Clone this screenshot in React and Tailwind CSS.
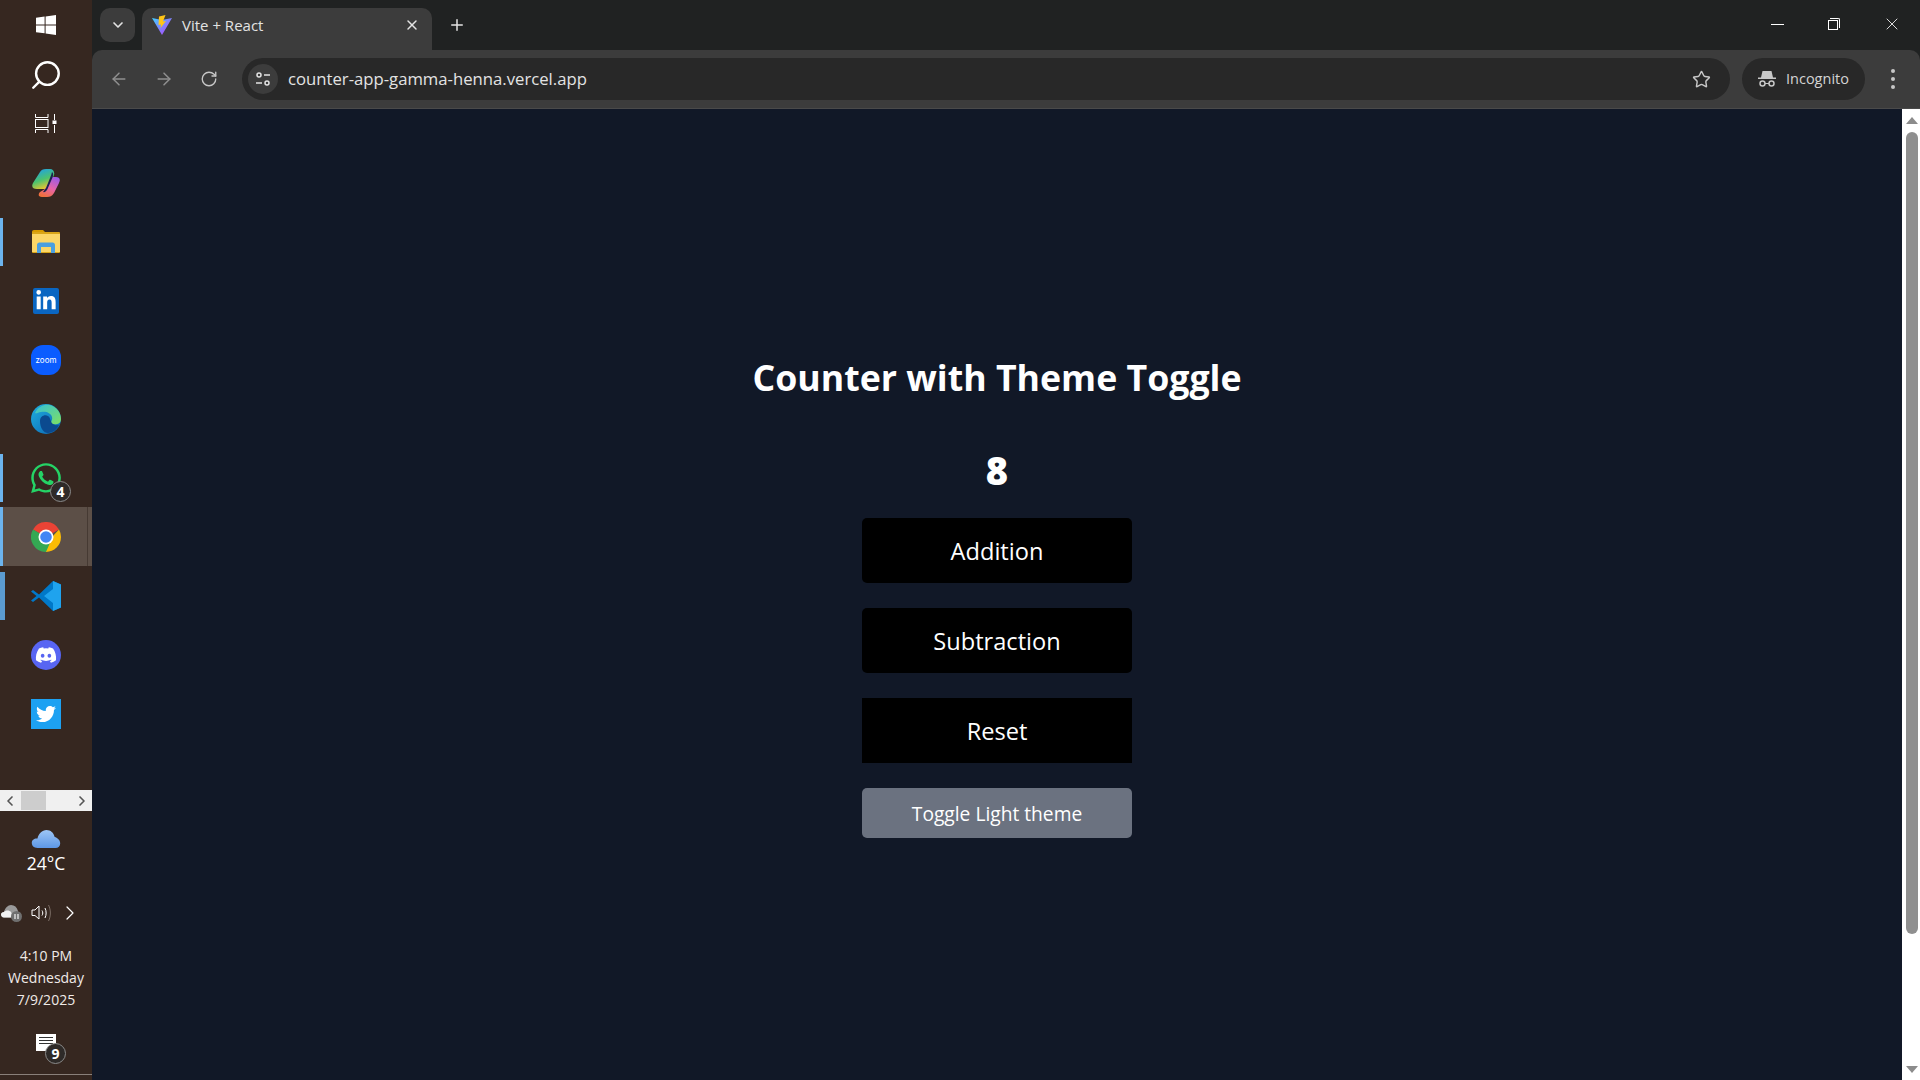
import React from 'react';
import { FaDiscord, FaTwitter, FaWhatsapp, FaLinkedinIn } from 'react-icons/fa';
import { ChevronDown, X, Plus, ArrowLeft, ArrowRight, RotateCw, Star, Search, ChevronLeft, ChevronRight } from 'lucide-react';

const WindowsIcon = () => (
    <svg width="20" height="20" viewBox="0 0 20 20" fill="#fff">
        <path d="M0 2.8 8.6 1.6V9.4H0ZM9.6 1.4 20 0V9.4H9.6ZM0 10.4H8.6V18.3L0 17.2ZM9.6 10.4H20V20L9.6 18.5Z" />
    </svg>
);

const TaskViewIcon = () => (
    <svg width="22" height="20" viewBox="0 0 22 20" fill="none" stroke="#fff" strokeWidth="1">
        <path d="M.5 0V3.5H13V0M.5 19V15.5H13V19" />
        <rect x=".5" y="5.5" width="12.5" height="8" />
        <path d="M19.5 0V6M19.5 11V19" />
        <rect x="17.5" y="6.5" width="4" height="3.5" fill="#fff" stroke="none" />
    </svg>
);

const CopilotIcon = () => (
    <svg width="28" height="28" viewBox="0 0 28 28">
        <defs>
            <linearGradient id="copA" x1="0.2" y1="0" x2="0.6" y2="1">
                <stop offset="0" stopColor="#1c9fee" />
                <stop offset=".55" stopColor="#4cc36e" />
                <stop offset="1" stopColor="#f5c42c" />
            </linearGradient>
            <linearGradient id="copB" x1="0.8" y1="0" x2="0.3" y2="1">
                <stop offset="0" stopColor="#9a5be6" />
                <stop offset=".55" stopColor="#e864a8" />
                <stop offset="1" stopColor="#f0703c" />
            </linearGradient>
        </defs>
        <path d="M8 3C9 1 11 0 14 0H18C21 0 23 3 22 6L16 20H5C1 20 -1 18 1 14Z" fill="url(#copA)" />
        <path d="M20 8H24C27 8 29 10 27 14L22 24C20 27 18 28 15 28H10C6 28 6 25 8 23L13 20Z" fill="url(#copB)" />
        <path d="M20 3C21.500 4 21.500 6 20.500 8.500L15.500 20C14.500 22.500 12.500 23.500 11 23L14 19L18 9C19 7 19.500 5 20 3Z" fill="#1b2350" />
    </svg>
);

const FolderIcon = () => (
    <svg width="28" height="24" viewBox="0 0 28 24">
        <path d="M0 2C0 .8.8 0 2 0H11L13 2V5H0Z" fill="#d79b00" />
        <rect x="0" y="2" width="28" height="21" rx="1" fill="#d9a518" />
        <rect x="0" y="4" width="28" height="18" fill="#fbd667" />
        <path d="M5 23V15C5 13.5 6 12.5 7.5 12.5H20.5C22 12.5 23 13.5 23 15V23H19V17H9V23Z" fill="#4a9fe0" />
    </svg>
);

const EdgeIcon = () => (
    <svg width="30" height="30" viewBox="0 0 30 30">
        <defs>
            <linearGradient id="edgeA" x1="0" y1="0" x2="1" y2="1">
                <stop offset="0" stopColor="#1fb0e0" />
                <stop offset="1" stopColor="#0c62b0" />
            </linearGradient>
            <linearGradient id="edgeB" x1="0" y1="0" x2="1" y2="1">
                <stop offset="0" stopColor="#35c1d8" />
                <stop offset="1" stopColor="#7fe060" />
            </linearGradient>
        </defs>
        <circle cx="15" cy="15" r="15" fill="url(#edgeA)" />
        <path d="M4 9C7 2 14 0 19 1C26 3 30 9 30 15C30 20 25 21 21 20C18 19 22 17 21 13C20 9 15 7 10 8C7 8.500 5 10 4 9Z" fill="url(#edgeB)" />
        <path d="M9 17C9 12 14 10 17 12C20 14 19 18 22 20C25 22 27 21 28 21C26 26 21 29 17 29C12 29 9 23 9 17Z" fill="#0b4a8f" />
    </svg>
);

const ChromeIcon = () => (
    <svg width="30" height="30" viewBox="0 0 30 30">
        <path d="M15 15 2 7.500A15 15 0 0 1 28 7.500Z" fill="#ea4335" />
        <path d="M15 15H30A15 15 0 0 1 15 30Z" fill="#fbbc04" />
        <path d="M28 7.500A15 15 0 0 1 30 15L15 30 21 15Z" fill="#fbbc04" />
        <path d="M2 7.500 15 15 21.500 15 15 30A15 15 0 0 1 2 7.500Z" fill="#34a853" />
        <circle cx="15" cy="15" r="7.500" fill="#fff" />
        <circle cx="15" cy="15" r="5.800" fill="#4285f4" />
    </svg>
);

const VsCodeIcon = () => (
    <svg width="30" height="30" viewBox="0 0 30 30">
        <path d="M22 0 30 3.500V26.500L22 30 8 16.500 2 21 0 19.500 5.500 15 0 10.500 2 9 8 13.500Z" fill="#0078c8" />
        <path d="M22 0 30 3.500V26.500L22 30ZM22 8 13 15 22 22Z" fill="#1fa3ee" fillRule="evenodd" />
    </svg>
);

const WeatherIcon = () => (
    <svg width="30" height="18" viewBox="0 0 30 19">
        <defs>
            <linearGradient id="cloud" x1="0" y1="0" x2="0" y2="1">
                <stop offset="0" stopColor="#9ec6f5" />
                <stop offset="1" stopColor="#5d97e6" />
            </linearGradient>
        </defs>
        <path d="M6 19C2 19 0 16.500 0 13.500 0 10.500 3 8.500 6 9 7 4 11 0 15.500 0 20 0 23 3 24 7 27 8 30 10.500 30 14 30 17 28 19 25 19Z" fill="url(#cloud)" />
    </svg>
);

const TrayCloudIcon = () => (
    <svg width="21" height="17" viewBox="0 0 21 17">
        <path d="M3 12.500C1 12.500 0 11 0 9.500 0 8 1.500 7 3 7 4 3 7 0 10 0 13.500 0 16 2 17 6V12.500Z" fill="#9a9a9a" />
        <path d="M3 12.500C1 12.500 0 11 0 9.500 0 8 1.500 7 3 7 5 5 8 5 10 7 11 8.500 11 11 10 12.500Z" fill="#f2f2f2" />
        <circle cx="15.500" cy="11.500" r="5.500" fill="#6f6f6f" />
        <path d="M14 9V14M17 9V14" stroke="#f2f2f2" strokeWidth="1.200" />
    </svg>
);

const SpeakerIcon = () => (
    <svg width="22" height="18" viewBox="0 0 22 18" fill="none" stroke="#fff" strokeWidth="1">
        <path d="M1 6H4L8 2V15L4 11.500H1Z" />
        <path d="M11 6.500C12 8 12 10 11 11.500" />
        <path d="M14 4C15.500 7 15.500 11 14 14" />
        <path d="M17.500 1C20 6 20 12 17.500 17" stroke="#7a6c64" />
    </svg>
);

const ViteIcon = () => (
    <svg width="20" height="20" viewBox="0 0 20 20">
        <defs>
            <linearGradient id="viteA" x1="0" y1="0" x2="1" y2="1">
                <stop offset="0" stopColor="#41d1ff" />
                <stop offset="1" stopColor="#bd34fe" />
            </linearGradient>
        </defs>
        <path d="M0 3 10 5 20 3 10 20Z" fill="url(#viteA)" />
        <path d="M13.500 0 7 1.500 6.500 10 9 9.500 8.500 13 14 6 11 6.500Z" fill="#ffc517" />
    </svg>
);

const TuneIcon = () => (
    <svg width="16" height="16" viewBox="0 0 16 16" fill="none" stroke="#e3e3e3" strokeWidth="1.500">
        <circle cx="4" cy="4" r="2" />
        <path d="M9 4H15M1 12H7" />
        <circle cx="12" cy="12" r="2" />
    </svg>
);

const IncognitoIcon = () => (
    <svg width="18" height="16" viewBox="0 0 18 16" fill="#c7c7c7">
        <path d="M4.500 0H13.500L15 6.500H18V8H0V6.500H3Z" />
        <circle cx="4.500" cy="12.500" r="2.500" fill="none" stroke="#c7c7c7" strokeWidth="1.500" />
        <circle cx="13.500" cy="12.500" r="2.500" fill="none" stroke="#c7c7c7" strokeWidth="1.500" />
        <path d="M7 12H11V13H7Z" />
    </svg>
);

const TaskbarItem = ({ children, indicator, active, open }) => (
    <div className={`relative h-[59px] flex items-center justify-center ${active ? 'bg-[#5c4f47]' : ''}`}>
        {indicator && <div className="absolute left-0 top-[6px] bottom-[5px] w-[3px] bg-[#6cb4ee]"></div>}
        {active && <div className="absolute left-0 top-0 bottom-0 w-[3px] bg-[#6cb4ee]"></div>}
        {active && <div className="absolute right-[4px] top-0 bottom-0 w-[1px] bg-[#463a33]"></div>}
        {open && <div className="absolute left-0 top-[6px] bottom-[5px] w-[5px] bg-[#5b9bd0]"></div>}
        {children}
    </div>
);

const Badge = ({ value, className }) => (
    <span className={`absolute w-[21px] h-[21px] rounded-full bg-[#2e2a28] border border-[#8a8a8a] text-white text-[14px] font-bold leading-[19px] text-center ${className}`}>
        {value}
    </span>
);

const Taskbar = () => (
    <aside className="w-[92px] h-full shrink-0 bg-[#362720] flex flex-col text-white">
        <div className="h-[50px] flex items-center justify-center"><WindowsIcon /></div>
        <div className="h-[49px] flex items-center justify-center"><Search size={34} strokeWidth={1.700} className="-scale-x-100" /></div>
        <div className="h-[49px] flex items-center justify-center"><TaskViewIcon /></div>
        <div className="h-[64px] pt-[5px] flex items-center justify-center"><CopilotIcon /></div>
        <TaskbarItem indicator><FolderIcon /></TaskbarItem>
        <TaskbarItem>
            <div className="w-[26px] h-[26px] bg-[#0a66c2] rounded-[2px] flex items-center justify-center"><FaLinkedinIn size={22} color="#fff" /></div>
        </TaskbarItem>
        <TaskbarItem>
            <div className="w-[30px] h-[30px] bg-[#0b5cff] rounded-[12px] flex items-center justify-center text-[8px] text-white font-['Inter',sans-serif]">zoom</div>
        </TaskbarItem>
        <TaskbarItem><EdgeIcon /></TaskbarItem>
        <TaskbarItem indicator>
            <div className="relative">
                <FaWhatsapp size={34} color="#25d366" />
                <Badge value="4" className="left-[21px] top-[20px]" />
            </div>
        </TaskbarItem>
        <TaskbarItem active><ChromeIcon /></TaskbarItem>
        <TaskbarItem open><VsCodeIcon /></TaskbarItem>
        <TaskbarItem>
            <div className="w-[30px] h-[30px] bg-[#5865f2] rounded-full flex items-center justify-center"><FaDiscord size={22} color="#fff" /></div>
        </TaskbarItem>
        <TaskbarItem>
            <div className="w-[30px] h-[30px] bg-[#1da1f2] flex items-center justify-center"><FaTwitter size={20} color="#fff" /></div>
        </TaskbarItem>
        <div className="relative mt-[47px] h-[21px] bg-[#f0f0f0] flex items-center justify-between px-[2px]">
            <ChevronLeft size={16} color="#555" strokeWidth={2.500} />
            <div className="absolute left-[21px] top-[1px] w-[25px] h-[19px] bg-[#cdcdcd]"></div>
            <ChevronRight size={16} color="#555" strokeWidth={2.500} />
        </div>
        <div className="mt-[19px] flex flex-col items-center">
            <WeatherIcon />
            <div className="text-[17.500px] leading-[22px] mt-[4px]">24°C</div>
        </div>
        <div className="mt-[28px] h-[22px] flex items-center pl-[1px]">
            <TrayCloudIcon />
            <div className="ml-[9px]"><SpeakerIcon /></div>
            <ChevronRight size={24} strokeWidth={1.200} className="ml-[5px]" />
        </div>
        <div className="mt-[21px] text-center text-[14px] leading-[22px] text-[#f0ebe8]">
            <div>4:10 PM</div>
            <div>Wednesday</div>
            <div>7/9/2025</div>
        </div>
        <div className="mt-[23px] relative flex justify-center">
            <div className="relative w-[20px] h-[17px] bg-white flex flex-col gap-[2px] px-[3px] pt-[3px]">
                <div className="h-[1px] bg-[#333]"></div>
                <div className="h-[1px] bg-[#333]"></div>
                <div className="h-[1px] bg-[#333]"></div>
                <Badge value="9" className="left-[9px] top-[9px]" />
            </div>
        </div>
        <div className="mt-auto mb-[5px] h-[1px] bg-[#8a807a]"></div>
    </aside>
);

const TabStrip = () => (
    <div className="h-[50px] bg-[#202222] flex items-start pl-[8px]">
        <div className="mt-[8px] w-[35px] h-[34px] rounded-[10px] bg-[#3c3c3c] flex items-center justify-center">
            <ChevronDown size={16} color="#e3e3e3" strokeWidth={2.500} />
        </div>
        <div className="mt-[8px] ml-[7px] w-[290px] h-[42px] rounded-t-[10px] bg-[#3c3c3c] flex items-center pl-[10px] pr-[12px] pb-[8px] text-[#e3e3e3]">
            <ViteIcon />
            <span className="ml-[10px] text-[15px] flex-1 font-['Open_Sans',sans-serif]">Vite + React</span>
            <X size={16} strokeWidth={2.200} />
        </div>
        <Plus size={18} color="#e3e3e3" strokeWidth={2} className="mt-[16px] ml-[16px]" />
        <div className="ml-auto flex items-center h-[50px] pb-[2px] text-white">
            <div className="w-[13px] h-[1px] bg-white mr-[44px]"></div>
            <div className="relative w-[12px] h-[12px] mr-[42px]">
                <div className="absolute right-0 top-0 w-[10px] h-[10px] border-t border-r border-white rounded-tr-[2px]"></div>
                <div className="absolute left-0 bottom-0 w-[10px] h-[10px] border border-white bg-[#202222]"></div>
            </div>
            <X size={20} strokeWidth={1} className="mr-[18px]" />
        </div>
    </div>
);

const Toolbar = () => (
    <div className="h-[59px] bg-[#3c3c3c] rounded-tl-[10px] rounded-tr-[10px] border-b border-[#4a4a4a] flex items-center pl-[17px] pr-[25px] text-[#8f8f8f]">
        <ArrowLeft size={20} strokeWidth={1.800} />
        <ArrowRight size={20} strokeWidth={1.800} className="ml-[25px]" />
        <RotateCw size={18} color="#c7c7c7" strokeWidth={1.800} className="ml-[26px]" />
        <div className="ml-[24px] flex-1 h-[42px] rounded-full bg-[#282828] flex items-center pl-[6px] pr-[19px]">
            <div className="w-[30px] h-[30px] rounded-full bg-[#3c3c3c] flex items-center justify-center"><TuneIcon /></div>
            <span className="ml-[10px] flex-1 text-[#e3e3e3] text-[16.700px] font-['Open_Sans',sans-serif]">counter-app-gamma-henna.vercel.app</span>
            <Star size={19} color="#c7c7c7" strokeWidth={1.800} />
        </div>
        <div className="ml-[12px] w-[123px] h-[42px] rounded-full bg-[#282828] flex items-center pl-[16px] text-[#d4d4d4] text-[14.500px] font-['Open_Sans',sans-serif]">
            <IncognitoIcon />
            <span className="ml-[10px]">Incognito</span>
        </div>
        <div className="ml-[26px] flex flex-col gap-[4px]">
            <div className="w-[4px] h-[4px] rounded-full bg-[#c7c7c7]"></div>
            <div className="w-[4px] h-[4px] rounded-full bg-[#c7c7c7]"></div>
            <div className="w-[4px] h-[4px] rounded-full bg-[#c7c7c7]"></div>
        </div>
    </div>
);

const Scrollbar = () => (
    <div className="w-[18px] h-full bg-white flex flex-col items-center pl-[2px]">
        <div className="mt-[8px] w-0 h-0 border-x-[6px] border-x-transparent border-b-[7px] border-b-[#8c8c8c]"></div>
        <div className="mt-[8px] w-[12px] h-[802px] rounded-full bg-[#8f8f8f]"></div>
        <div className="mt-auto mb-[7px] w-0 h-0 border-x-[6px] border-x-transparent border-t-[7px] border-t-[#8c8c8c]"></div>
    </div>
);

const App = () => {
    return (
        <div className="w-[1920px] h-[1080px] overflow-hidden flex font-['Open_Sans',sans-serif] bg-[#202222]">
            <Taskbar />
            <div className="flex-1 flex flex-col min-w-0">
                <TabStrip />
                <Toolbar />
                <div className="flex-1 flex min-h-0">
                    <main className="flex-1 bg-[#111827] flex flex-col items-center pt-[244px] text-white">
                        <h1 className="text-[35.700px] leading-[48px] font-bold">Counter with Theme Toggle</h1>
                        <p className="mt-[45px] text-[38px] leading-[48px] font-extrabold">8</p>
                        <button className="mt-[24px] w-[270px] h-[65px] pt-[3px] bg-black rounded-[5px] text-[23.600px]">Addition</button>
                        <button className="mt-[25px] w-[270px] h-[65px] pt-[3px] bg-black rounded-[5px] text-[23.600px]">Subtraction</button>
                        <button className="mt-[25px] w-[270px] h-[65px] pt-[3px] bg-black text-[23.600px]">Reset</button>
                        <button className="mt-[25px] w-[270px] h-[50px] pt-[2px] bg-[#6b7280] rounded-[5px] text-[19.200px]">Toggle Light theme</button>
                    </main>
                    <Scrollbar />
                </div>
            </div>
        </div>
    );
};

export default App;
